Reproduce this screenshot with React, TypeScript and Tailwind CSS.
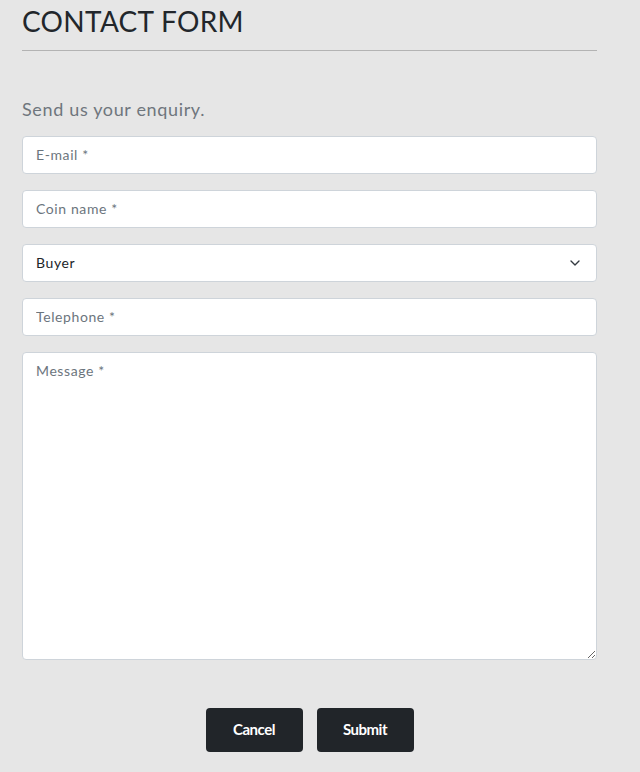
import { ChevronDown } from "lucide-react";

const inputCls =
  "w-full h-[38px] px-[13px] pb-[1px] bg-white border border-[#ced4da] rounded-[4px] text-[14px] tracking-[0.6px] text-[#212529] placeholder:text-[#6c757d] outline-none";

export default function App() {
  return (
    <div className="min-h-[772px] w-[640px] bg-[#e6e6e6] font-['Lato',sans-serif]">
      <div className="w-[575px] ml-[22px]">
        {/* Heading */}
        <h1 className="pt-[4px] text-[28px] leading-[34px] tracking-[0.3px] text-[#22262b]">
          CONTACT FORM
        </h1>
        <hr className="mt-[12px] border-0 border-t border-[#b3b3b3]" />

        <p className="mt-[45px] text-[18px] leading-[26px] text-[#6f767d] tracking-[0.65px]">
          Send us your enquiry.
        </p>

        {/* Form */}
        <form className="mt-[14px] flex flex-col gap-[16px]">
          <input className={inputCls} placeholder="E-mail *" />
          <input className={inputCls} placeholder="Coin name *" />
          <div className="relative">
            <select className={inputCls + " appearance-none"} defaultValue="Buyer">
              <option>Buyer</option>
              <option>Seller</option>
            </select>
            <ChevronDown
              size={16}
              strokeWidth={2}
              className="absolute right-[14px] top-[11px] text-[#343a40] pointer-events-none"
            />
          </div>
          <input className={inputCls} placeholder="Telephone *" />
          <textarea
            className="w-full h-[308px] px-[13px] py-[7px] bg-white border border-[#ced4da] rounded-[4px] text-[14px] tracking-[0.6px] text-[#212529] placeholder:text-[#6c757d] outline-none"
            placeholder="Message *"
          />

          <div className="mt-[32px] flex justify-center gap-[14px]">
            <button
              type="button"
              className="w-[97px] h-[44px] pb-[1px] bg-[#212529] rounded-[4px] text-white text-[15px] font-bold tracking-[-0.5px]"
            >
              Cancel
            </button>
            <button
              type="button"
              className="w-[97px] h-[44px] pb-[1px] bg-[#212529] rounded-[4px] text-white text-[15px] font-bold tracking-[-0.5px]"
            >
              Submit
            </button>
          </div>
        </form>
      </div>
    </div>
  );
}
